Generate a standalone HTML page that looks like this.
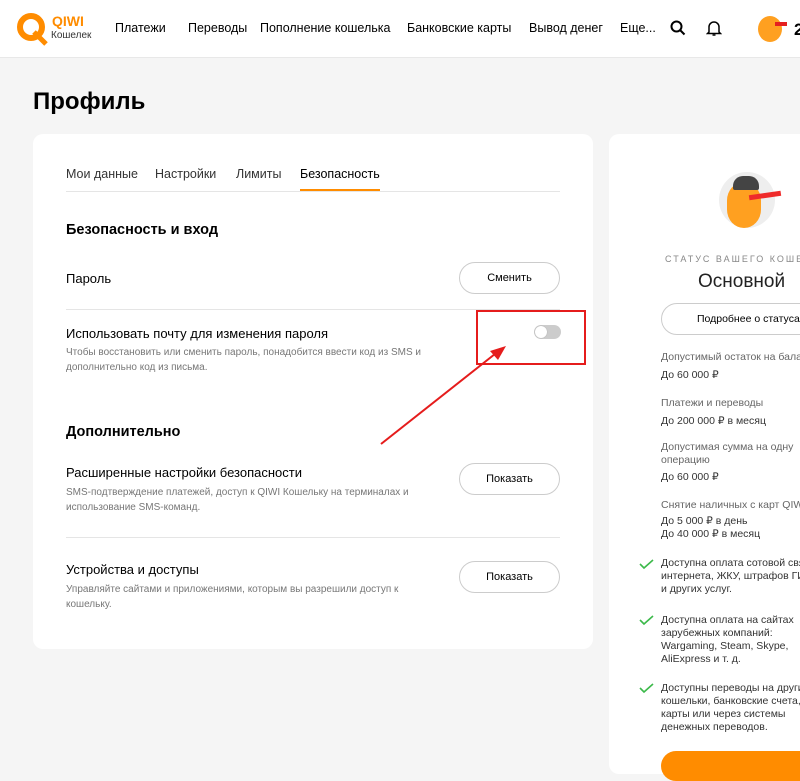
<!DOCTYPE html><html><head><meta charset="utf-8"><style>
*{margin:0;padding:0;box-sizing:border-box}
body{width:800px;height:755px;overflow:hidden;background:#f5f5f5;font-family:"Liberation Sans",sans-serif;color:#000;position:relative}
.a{position:absolute;white-space:nowrap}
.hdr{position:absolute;left:0;top:0;width:800px;height:58px;background:#fff;border-bottom:1px solid #e8e8e8}
.nav{font-size:12.5px;top:21px}
.card{position:absolute;background:#fff;border-radius:10px}
.btn{position:absolute;border:1px solid #ccc;border-radius:16px;background:#fff;font-size:11px;text-align:center;line-height:30px;height:32px}
.t{font-size:13px}
.s{font-size:10px;color:#777;line-height:15px;white-space:normal}
.h{font-size:14.5px;font-weight:bold}
.r{font-size:10.5px;color:#333;line-height:13px}
.g{color:#666;display:block;margin-bottom:5px}
</style></head><body>
<div class="hdr">
<svg class="a" style="left:16px;top:12px" width="34" height="34" viewBox="0 0 34 34"><circle cx="15" cy="15" r="11" fill="none" stroke="#ff8c00" stroke-width="6"/><path d="M18 20 L30 32" stroke="#ff8c00" stroke-width="5"/></svg>
<div class="a" style="left:52px;top:13px;font-size:14px;font-weight:bold;color:#ff8c00">QIWI</div>
<div class="a" style="left:51px;top:30px;font-size:10px;color:#333">Кошелек</div>
<div class="a nav" style="left:115px">Платежи</div>
<div class="a nav" style="left:188px">Переводы</div>
<div class="a nav" style="left:260px">Пополнение кошелька</div>
<div class="a nav" style="left:407px">Банковские карты</div>
<div class="a nav" style="left:529px">Вывод денег</div>
<div class="a nav" style="left:620px">Еще...</div>
<svg class="a" style="left:670px;top:20px" width="16" height="16"><circle cx="6.5" cy="6.5" r="5" fill="none" stroke="#000" stroke-width="2"/><path d="M10 10l4.5 4.5" stroke="#000" stroke-width="2"/></svg>
<svg class="a" style="left:706px;top:19px" width="16" height="18"><path d="M3 13V8a5 5 0 0 1 10 0v5l1.5 1.5h-13z" fill="none" stroke="#000" stroke-width="1.5"/><path d="M6.5 16h3" stroke="#000" stroke-width="1.5"/></svg>
<div class="a" style="left:758px;top:16px;width:24px;height:26px;border-radius:50%;background:#ffa020"></div>
<div class="a" style="left:775px;top:22px;width:12px;height:4px;background:#e52020"></div>
<div class="a" style="left:794px;top:20px;font-size:17px;font-weight:bold">2</div>
</div>
<div class="a" style="left:33px;top:88px;font-size:24px;font-weight:bold">Профиль</div>
<div class="card" style="left:33px;top:134px;width:560px;height:515px">
<div class="a t" style="left:33px;top:33px;font-size:12.5px;color:#333">Мои данные</div>
<div class="a t" style="left:122px;top:33px;font-size:12.5px;color:#333">Настройки</div>
<div class="a t" style="left:203px;top:33px;font-size:12.5px;color:#333">Лимиты</div>
<div class="a t" style="left:267px;top:33px;font-size:12.5px">Безопасность</div>
<div class="a" style="left:33px;top:57px;width:494px;height:1px;background:#e5e5e5"></div>
<div class="a" style="left:267px;top:55px;width:80px;height:2px;background:#ff8c00"></div>
<div class="a h" style="left:33px;top:88px">Безопасность и вход</div>
<div class="a t" style="left:33px;top:137px">Пароль</div>
<div class="btn" style="left:426px;top:128px;width:101px">Сменить</div>
<div class="a" style="left:33px;top:175px;width:494px;height:1px;background:#e5e5e5"></div>
<div class="a t" style="left:33px;top:192px">Использовать почту для изменения пароля</div>
<div class="a s" style="left:33px;top:211px;width:390px">Чтобы восстановить или сменить пароль, понадобится ввести код из SMS и дополнительно код из письма.</div>
<div class="a" style="left:501px;top:191px;width:27px;height:14px;border-radius:7px;background:#ccc"></div>
<div class="a" style="left:502px;top:192px;width:12px;height:12px;border-radius:50%;background:#fff;box-shadow:0 0 1px #999"></div>
<div class="a h" style="left:33px;top:290px">Дополнительно</div>
<div class="a t" style="left:33px;top:331px">Расширенные настройки безопасности</div>
<div class="a s" style="left:33px;top:351px;width:380px">SMS-подтверждение платежей, доступ к QIWI Кошельку на терминалах и использование SMS-команд.</div>
<div class="btn" style="left:426px;top:329px;width:101px">Показать</div>
<div class="a" style="left:33px;top:403px;width:494px;height:1px;background:#e5e5e5"></div>
<div class="a t" style="left:33px;top:428px">Устройства и доступы</div>
<div class="a s" style="left:33px;top:448px;width:360px">Управляйте сайтами и приложениями, которым вы разрешили доступ к кошельку.</div>
<div class="btn" style="left:426px;top:427px;width:101px">Показать</div>
</div>
<svg class="a" style="left:0;top:0" width="800" height="755"><rect x="477" y="311" width="108" height="53" fill="none" stroke="#e51c1c" stroke-width="2"/><path d="M381 444 L500 350" stroke="#e51c1c" stroke-width="2"/><path d="M506 346 L490 351 L498 360z" fill="#e51c1c"/></svg>
<div class="card" style="left:609px;top:134px;width:220px;height:640px">
<div class="a" style="left:110px;top:38px;width:56px;height:56px;border-radius:50%;background:#eee"></div>
<div class="a" style="left:118px;top:48px;width:34px;height:46px;border-radius:50%/40%;background:#ffa020"></div>
<div class="a" style="left:124px;top:42px;width:26px;height:14px;border-radius:10px 10px 2px 2px;background:#444"></div>
<div class="a" style="left:140px;top:59px;width:32px;height:5px;background:#ef2b2b;transform:rotate(-8deg)"></div>
<div class="a" style="left:56px;top:120px;font-size:9px;letter-spacing:2px;color:#888">СТАТУС ВАШЕГО КОШЕЛЬКА</div>
<div class="a" style="left:89px;top:137px;font-size:19px;color:#222">Основной</div>
<div class="btn" style="left:52px;top:169px;width:180px;font-size:10.5px">Подробнее о статусах</div>
<div class="a r" style="left:52px;top:217px"><span class="g">Допустимый остаток на балансе</span>До 60 000 ₽</div>
<div class="a r" style="left:52px;top:263px"><span class="g">Платежи и переводы</span>До 200 000 ₽ в месяц</div>
<div class="a r" style="left:52px;top:307px"><span class="g" style="margin-bottom:4px">Допустимая сумма на одну<br>операцию</span>До 60 000 ₽</div>
<div class="a r" style="left:52px;top:365px"><span class="g" style="margin-bottom:3px">Снятие наличных с карт QIWI</span>До 5 000 ₽ в день<br>До 40 000 ₽ в месяц</div>
<div class="a r" style="left:52px;top:423px">Доступна оплата сотовой связи,<br>интернета, ЖКУ, штрафов ГИБДД<br>и других услуг.</div>
<div class="a r" style="left:52px;top:480px">Доступна оплата на сайтах<br>зарубежных компаний:<br>Wargaming, Steam, Skype,<br>AliExpress и т. д.</div>
<div class="a r" style="left:52px;top:548px">Доступны переводы на другие<br>кошельки, банковские счета,<br>карты или через системы<br>денежных переводов.</div>
<svg class="a" style="left:30px;top:425px" width="16" height="200"><g fill="none" stroke="#3cb94a" stroke-width="1.6"><path d="M1 5l4 4 9-8"/><path d="M1 61l4 4 9-8"/><path d="M1 129l4 4 9-8"/></g></svg>
<div class="a" style="left:52px;top:617px;width:180px;height:30px;border-radius:15px;background:#ff8c00"></div>
</div>
</body></html>
